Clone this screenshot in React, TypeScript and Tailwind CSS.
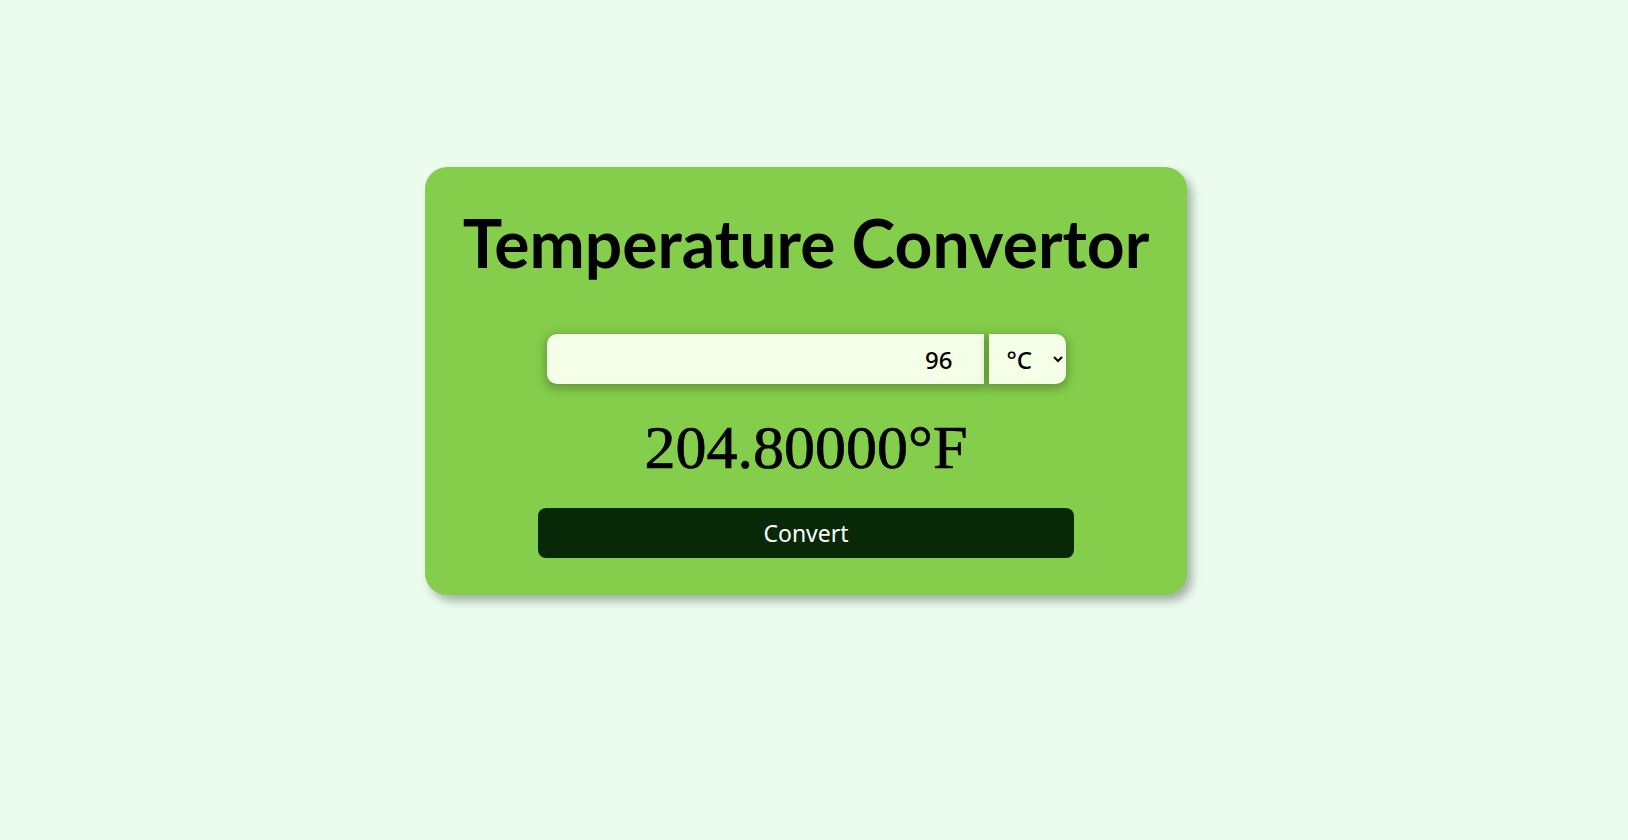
import { useState } from "react";

const App = () => {
  const [value, setValue] = useState("96");
  const [unit, setUnit] = useState("C");

  const n = parseFloat(value) || 0;
  const result =
    unit === "C" ? `${(n * 1.8 + 32).toFixed(5)}°F` : `${((n - 32) / 1.8).toFixed(5)}°C`;

  return (
    <div className="min-h-screen w-full bg-[#ebfcef] flex justify-center pt-[167px] pr-[16px]">
      <div className="w-[762px] h-[428px] bg-[#84ce4b] rounded-[22px] shadow-[5px_6px_10px_rgba(0,0,0,0.3)] flex flex-col items-center pt-[36px]">
        <h1 className="font-['Lato',sans-serif] font-bold text-[66px] leading-[80px] text-black">
          Temperature Convertor
        </h1>
        <div className="mt-[51px] flex gap-[5px] h-[50px]">
          <input
            value={value}
            onChange={(e) => setValue(e.target.value)}
            className="w-[437px] h-full bg-[#f5fee6] rounded-l-[10px] text-right pr-[31px] font-['Noto_Sans',sans-serif] font-medium text-[24px] text-black outline-none shadow-[0_3px_10px_2px_rgba(0,0,0,0.25)]"
          />
          <select
            value={unit}
            onChange={(e) => setUnit(e.target.value)}
            className="w-[77px] h-full bg-[#f5fee6] rounded-r-[10px] pl-[14px] pr-[6px] font-['Noto_Sans',sans-serif] font-medium text-[24px] text-black outline-none shadow-[0_3px_10px_2px_rgba(0,0,0,0.25)]"
          >
            <option value="C">°C</option>
            <option value="F">°F</option>
          </select>
        </div>
        <div className="mt-[31px] font-['Liberation_Serif',serif] text-[62px] leading-[64px] text-black [-webkit-text-stroke:0.7px_#000]">
          {result}
        </div>
        <button className="mt-[29px] w-[536px] h-[50px] bg-[#082908] rounded-[8px] text-white font-['Noto_Sans',sans-serif] text-[23px]">
          Convert
        </button>
      </div>
    </div>
  );
};

export default App;
